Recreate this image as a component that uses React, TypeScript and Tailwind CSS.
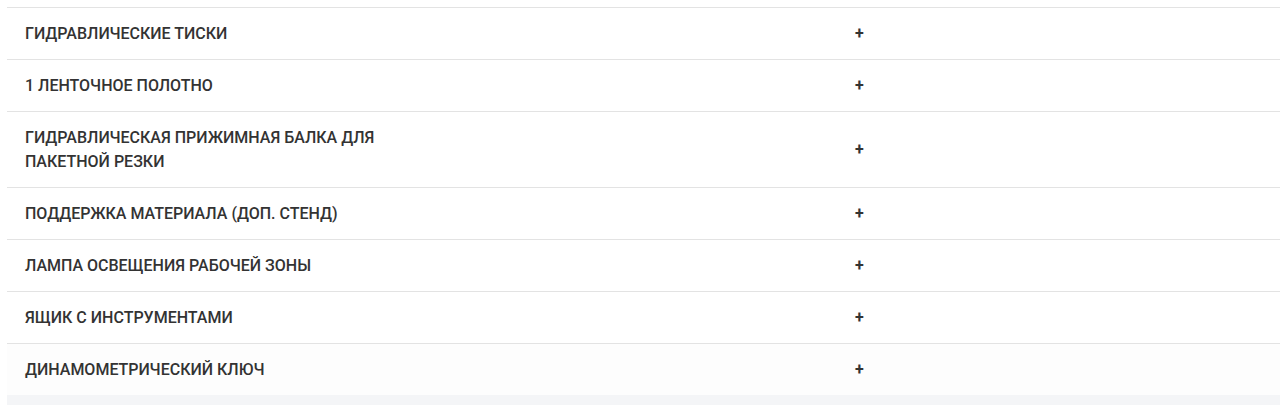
const items = [
  'Гидравлические тиски',
  '1 ленточное полотно',
  'Гидравлическая прижимная балка для пакетной резки',
  'Поддержка материала (доп. стенд)',
  'Лампа освещения рабочей зоны',
  'Ящик с инструментами',
  'Динамометрический ключ',
];

function OptionRow({ name, last }: { name: string; last: boolean }) {
  return (
    <div
      className={`grid grid-cols-[848px_1fr] border-t border-[#e3e3e3] ${
        last ? 'bg-[#fdfdfd]' : 'bg-white'
      }`}
    >
      <div className="pl-[18px] pt-[14px] pb-[13px]">
        <div className="max-w-[390px] text-[16px] leading-[24px] font-medium uppercase text-[#333333]">
          {name}
        </div>
      </div>
      <div className="flex items-center text-[16px] font-bold text-[#333333]">+</div>
    </div>
  );
}

export default function App() {
  return (
    <div className="min-h-[405px] bg-white pt-[7px] pl-[7px] font-['Roboto',sans-serif]">
      <div className="flex flex-col">
        {items.map((name, i) => (
          <OptionRow key={name} name={name} last={i === items.length - 1} />
        ))}
      </div>
      <div className="h-[10px] bg-[#f4f5f7]" />
    </div>
  );
}
